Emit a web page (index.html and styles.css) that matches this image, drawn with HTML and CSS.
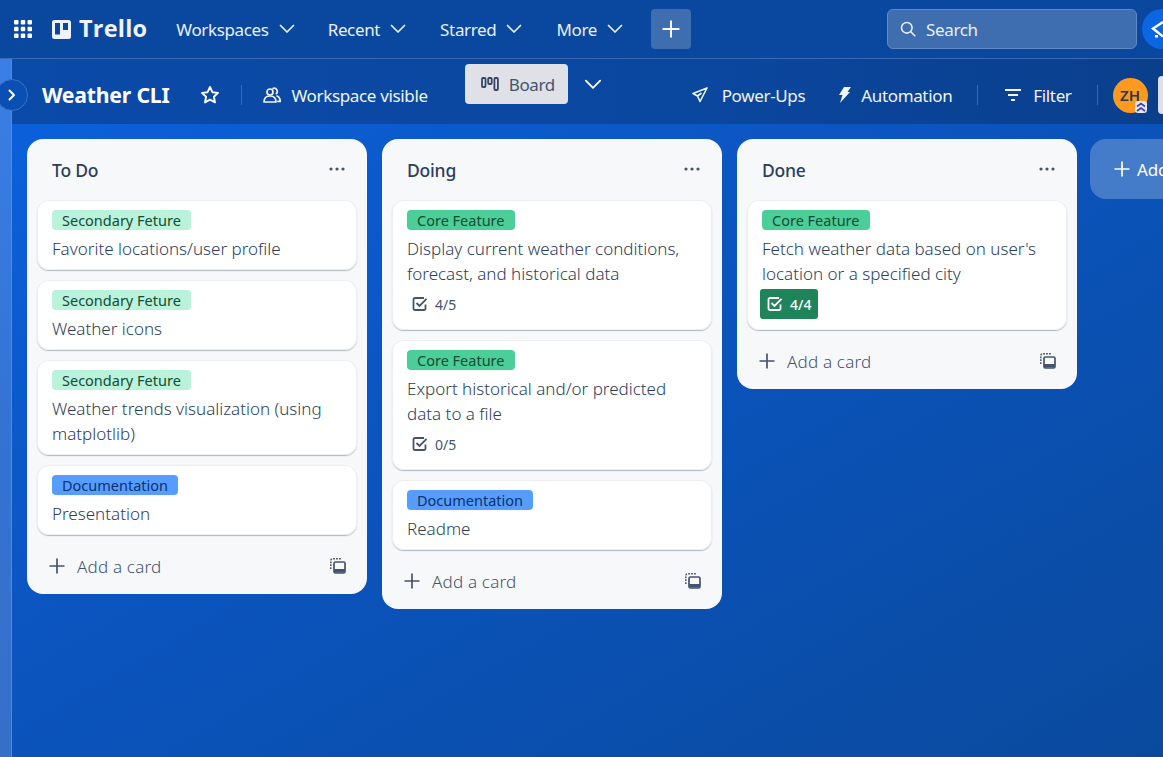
FILE: index.html
```html
<!DOCTYPE html>
<html lang="en">
<head>
<meta charset="utf-8">
<title>Weather CLI | Trello</title>
<link rel="stylesheet" href="styles.css">
</head>
<body>
<svg class="defs" width="0" height="0" aria-hidden="true">
  <defs>
    <symbol id="chev" viewBox="0 0 16 10"><path d="M1.500 1.500 8 8l6.500-6.500" fill="none" stroke="currentColor" stroke-width="1.700" stroke-linecap="round" stroke-linejoin="round"/></symbol>
    <symbol id="dots" viewBox="0 0 16 4"><circle cx="2" cy="2" r="1.600" fill="currentColor"/><circle cx="8" cy="2" r="1.600" fill="currentColor"/><circle cx="14" cy="2" r="1.600" fill="currentColor"/></symbol>
    <symbol id="plus" viewBox="0 0 16 16"><path d="M8 .5v15M.5 8h15" fill="none" stroke="currentColor" stroke-width="1.700"/></symbol>
    <symbol id="tpl" viewBox="0 0 16 16"><path d="M.8 11V2.500A1.700 1.700 0 0 1 2.500.8H11" fill="none" stroke="currentColor" stroke-width="1.500" stroke-dasharray="1.800 1.100"/><rect x="4" y="4" width="11" height="11" rx="1.500" fill="none" stroke="currentColor" stroke-width="1.700"/><path d="M4 11h11v3.500H4Z" fill="currentColor"/></symbol>
    <symbol id="check" viewBox="0 0 16 16"><path d="M13.500 8.500v4A1.500 1.500 0 0 1 12 14H3a1.500 1.500 0 0 1-1.500-1.500v-9A1.500 1.500 0 0 1 3 2h9" fill="none" stroke="currentColor" stroke-width="1.800"/><path d="m4.500 7 3 3L14.500 2.800" fill="none" stroke="currentColor" stroke-width="1.800"/></symbol>
  </defs>
</svg>

<header class="topnav">
  <svg class="apps" viewBox="0 0 18 18" width="18" height="18"><g fill="currentColor"><rect x="0" y="0" width="4.500" height="4.500" rx="1"/><rect x="6.750" y="0" width="4.500" height="4.500" rx="1"/><rect x="13.500" y="0" width="4.500" height="4.500" rx="1"/><rect x="0" y="6.750" width="4.500" height="4.500" rx="1"/><rect x="6.750" y="6.750" width="4.500" height="4.500" rx="1"/><rect x="13.500" y="6.750" width="4.500" height="4.500" rx="1"/><rect x="0" y="13.500" width="4.500" height="4.500" rx="1"/><rect x="6.750" y="13.500" width="4.500" height="4.500" rx="1"/><rect x="13.500" y="13.500" width="4.500" height="4.500" rx="1"/></g></svg>
  <div class="logo">
    <svg viewBox="0 0 19 19" width="19" height="19"><path fill-rule="evenodd" d="M2.500 0h14A2.500 2.500 0 0 1 19 2.500v14a2.500 2.500 0 0 1-2.500 2.500h-14A2.500 2.500 0 0 1 0 16.500v-14A2.500 2.500 0 0 1 2.500 0ZM3 3v11.500h5V3Zm8 0v7h5V3Z" fill="currentColor"/></svg>
    <span>Trello</span>
  </div>
  <nav class="menu">
    <a class="menu-item">Workspaces<svg class="chev"><use href="#chev"/></svg></a>
    <a class="menu-item">Recent<svg class="chev"><use href="#chev"/></svg></a>
    <a class="menu-item">Starred<svg class="chev"><use href="#chev"/></svg></a>
    <a class="menu-item">More<svg class="chev"><use href="#chev"/></svg></a>
  </nav>
  <button class="create"><svg width="18" height="18"><use href="#plus"/></svg></button>
  <div class="search">
    <svg viewBox="0 0 16 16" width="16" height="16"><circle cx="6.800" cy="6.800" r="5.300" fill="none" stroke="currentColor" stroke-width="1.600"/><path d="m10.800 10.800 4 4" stroke="currentColor" stroke-width="1.600" stroke-linecap="round"/></svg>
    <span>Search</span>
  </div>
  <div class="notice"><svg viewBox="0 0 40 40" width="40" height="40"><path d="M21 13 11 19.500l10 8" fill="none" stroke="#fff" stroke-width="2.400"/><path d="M13 26h3v2.500h-3Z" fill="#fff"/></svg></div>
</header>

<div class="page">
  <div class="sidebar-strip"></div>
  <button class="side-toggle"><svg viewBox="0 0 8 12" width="8" height="12"><path d="m1.500 1.500 4.500 4.500-4.500 4.500" fill="none" stroke="currentColor" stroke-width="2" stroke-linecap="round" stroke-linejoin="round"/></svg></button>

  <div class="boardbar">
    <h1 class="title">Weather CLI</h1>
    <svg class="star" viewBox="0 0 20 20" width="20" height="20"><path d="m10 2 2.400 5.200 5.600.7-4.100 3.900 1.100 5.600-5-2.800-5 2.800 1.100-5.600L2 7.900l5.600-.7Z" fill="none" stroke="currentColor" stroke-width="1.900" stroke-linejoin="round"/></svg>
    <span class="divider d1"></span>
    <div class="bar-item visible">
      <svg viewBox="0 0 18 16" width="18" height="16"><g fill="none" stroke="currentColor" stroke-width="1.700"><circle cx="7" cy="5" r="3"/><path d="M1 15c0-3.800 2.400-6 6-6s6 2.200 6 6Z" stroke-linejoin="round"/><path d="M9.500 1.700a3 3 0 0 1 3.200 5.300M13.500 8.700c2.200.8 3.700 3 3.700 5.600h-3"/></g></svg>
      <span>Workspace visible</span>
    </div>
    <div class="board-tab">
      <svg viewBox="0 0 18 14" width="18" height="14"><g fill="none" stroke="currentColor" stroke-width="1.800"><rect x="1" y="1" width="3.500" height="9" rx="1"/><rect x="7.200" y="1" width="3.500" height="6" rx="1"/><rect x="13.400" y="1" width="3.500" height="12" rx="1"/></g></svg>
      <span>Board</span>
    </div>
    <svg class="chev-big"><use href="#chev"/></svg>
    <div class="bar-item power">
      <svg viewBox="0 0 16 16" width="16" height="16"><path d="M15 1 1 6.500 5.500 9l2.500 5.500Z M5.500 9 9.500 6" fill="none" stroke="currentColor" stroke-width="1.600" stroke-linejoin="round"/></svg>
      <span>Power-Ups</span>
    </div>
    <div class="bar-item auto">
      <svg viewBox="0 0 13 16" width="13" height="16"><path d="M6 0h7L9.500 5H12L2 16l2.500-8H1Z" fill="currentColor"/></svg>
      <span>Automation</span>
    </div>
    <span class="divider d3"></span>
    <div class="bar-item filter">
      <svg viewBox="0 0 16 12" width="16" height="12"><path d="M0 1h16M3 6h10M6 11h4" stroke="currentColor" stroke-width="1.800"/></svg>
      <span>Filter</span>
    </div>
    <span class="divider d4"></span>
    <div class="avatar">ZH
      <span class="admin"><svg viewBox="0 0 12 12" width="12" height="12"><path d="m2 5.500 4-3 4 3M2 10l4-3 4 3" fill="none" stroke="#3f3fb5" stroke-width="1.600"/></svg></span>
    </div>
    <div class="share"></div>
  </div>

  <main class="board">
    <section class="list">
      <header class="list-head"><h2>To Do</h2><svg class="dots"><use href="#dots"/></svg></header>
      <div class="cards">
        <article class="card"><span class="label sec">Secondary Feture</span><p>Favorite locations/user profile</p></article>
        <article class="card"><span class="label sec">Secondary Feture</span><p>Weather icons</p></article>
        <article class="card"><span class="label sec">Secondary Feture</span><p>Weather trends visualization (using matplotlib)</p></article>
        <article class="card"><span class="label doc">Documentation</span><p>Presentation</p></article>
      </div>
      <footer class="list-foot"><svg class="plus"><use href="#plus"/></svg><span>Add a card</span><svg class="tpl"><use href="#tpl"/></svg></footer>
    </section>

    <section class="list">
      <header class="list-head"><h2>Doing</h2><svg class="dots"><use href="#dots"/></svg></header>
      <div class="cards">
        <article class="card"><span class="label core">Core Feature</span><p>Display current weather conditions, forecast, and historical data</p><div class="badges"><span class="badge"><svg><use href="#check"/></svg>4/5</span></div></article>
        <article class="card"><span class="label core">Core Feature</span><p>Export historical and/or predicted data to a file</p><div class="badges"><span class="badge"><svg><use href="#check"/></svg>0/5</span></div></article>
        <article class="card"><span class="label doc">Documentation</span><p>Readme</p></article>
      </div>
      <footer class="list-foot"><svg class="plus"><use href="#plus"/></svg><span>Add a card</span><svg class="tpl"><use href="#tpl"/></svg></footer>
    </section>

    <section class="list">
      <header class="list-head"><h2>Done</h2><svg class="dots"><use href="#dots"/></svg></header>
      <div class="cards">
        <article class="card"><span class="label core">Core Feature</span><p>Fetch weather data based on user's location or a specified city</p><div class="badges"><span class="badge done"><svg><use href="#check"/></svg>4/4</span></div></article>
      </div>
      <footer class="list-foot"><svg class="plus"><use href="#plus"/></svg><span>Add a card</span><svg class="tpl"><use href="#tpl"/></svg></footer>
    </section>

    <div class="add-list"><svg width="16" height="16"><use href="#plus"/></svg><span>Add another list</span></div>
  </main>
</div>
</body>
</html>
```
FILE: styles.css
```css
* { box-sizing: border-box; }
html, body { margin: 0; height: 100%; }
body {
  width: 1163px;
  height: 757px;
  overflow: hidden;
  font-family: "Noto Sans", "Open Sans", sans-serif;
  color: #172b4d;
  background: linear-gradient(150deg, #0b63e0 0%, #0b55c0 45%, #0a4a9e 100%);
  display: flex;
  flex-direction: column;
}
.defs { position: absolute; }
svg { display: block; flex: none; }
button { border: 0; padding: 0; font: inherit; color: inherit; }

/* top nav */
.topnav {
  height: 59px;
  flex: none;
  display: flex;
  align-items: center;
  color: #e9f0fb;
  background: #0a479f;
  border-bottom: 1px solid #3c6ab0;
  overflow: hidden;
}
.topnav > * { flex: none; }
.apps { margin-left: 14px; color: #fff; }
.logo { display: flex; align-items: center; gap: 8px; margin-left: 20px; color: #eef3fb; }
.logo span { font: 700 23.500px/1 "Open Sans", sans-serif; letter-spacing: .2px; }
.menu { display: flex; margin-left: 29px; gap: 34px; }
.menu-item { display: flex; align-items: center; gap: 10px; font-size: 17px; letter-spacing: -.35px; }
.menu-item:nth-child(2) { margin-left: -1px; }
.chev { width: 16px; height: 10px; }
.create {
  width: 40px; height: 40px; margin-left: 28px;
  display: flex; align-items: center; justify-content: center;
  background: #3e6db0; color: #fff; border-radius: 4px;
}
.search {
  width: 250px; height: 40px; margin-left: 196px;
  display: flex; align-items: center; gap: 10px; padding-left: 12px;
  background: #3e6db0; border: 1px solid #6189c2; border-radius: 6px;
  font-size: 17px; letter-spacing: -.35px;
}
.notice {
  width: 40px; height: 40px; margin-left: 5px;
  border-radius: 50%; background: #0c66e4;
}

/* page */
.page { position: relative; flex: 1; min-height: 0; padding-left: 12px; display: flex; flex-direction: column; }
.sidebar-strip {
  position: absolute; left: 0; top: 0; bottom: 0; width: 12px;
  background: linear-gradient(180deg, #3a7fe6 0%, #3473d4 50%, #366fc8 100%);
  border-right: 1px solid #5089e0;
}
.side-toggle {
  position: absolute; left: -4px; top: 20px; width: 32px; height: 32px; z-index: 2;
  border-radius: 50%; background: #0a4fb4; border: 1px solid #3c72c4; color: #fff;
  display: flex; align-items: center; justify-content: center;
}

/* board bar */
.boardbar {
  height: 65px; flex: none;
  display: flex; align-items: center;
  padding-top: 7px;
  color: #f0f4fb;
  background: linear-gradient(90deg, #0a4aa8 0%, #0a479f 60%, #0a3f8c 100%);
  font-size: 17px; letter-spacing: -.35px;
  white-space: nowrap;
}
.boardbar > * { flex: none; }
.title { margin: 0 0 0 30px; font-size: 21.200px; line-height: 1; font-weight: 700; color: #fff; letter-spacing: -.2px; }
.star { margin-left: 30px; color: #fff; }
.divider { width: 1px; height: 20px; background: #3c6ab0; }
.d1 { margin-left: 21px; }
.bar-item { display: flex; align-items: center; gap: 11px; }
.visible { margin-left: 21px; }
.board-tab {
  width: 103px; height: 40px; margin: -22px 0 0 37px;
  display: flex; align-items: center; gap: 10px; padding-left: 16px;
  background: #dfe1e6; color: #44546f; border-radius: 4px;
}
.board-tab svg { color: #344563; }
.chev-big { width: 18px; height: 11px; margin: -21px 0 0 16px; color: #fff; }
.power { margin-left: 90px; gap: 14px; }
.auto { margin-left: 33px; gap: 10px; }
.d3 { margin-left: 25px; }
.filter { margin-left: 27px; gap: 12px; }
.d4 { margin-left: 25px; }
.avatar {
  position: relative; width: 35px; height: 35px; margin-left: 15px;
  border-radius: 50%; background: #ff991f; color: #253858;
  display: flex; align-items: center; justify-content: center;
  font-size: 15px; font-weight: 600; letter-spacing: 0;
}
.admin {
  position: absolute; right: 1px; bottom: 0; width: 12px; height: 12px;
  background: #e4e6f0; border-radius: 3px;
}
.share { width: 20px; height: 38px; margin-left: 10px; background: #dfe1e6; border-radius: 4px; }

/* board */
.board { flex: 1; min-height: 0; display: flex; align-items: flex-start; gap: 15px; padding: 15px 0 0 15px; }
.list {
  width: 340px; flex: none;
  background: #f7f8f9; border-radius: 16px;
}
.list-head {
  height: 61px; display: flex; align-items: center; justify-content: space-between;
  padding: 0 22px 0 25px;
}
.list-head h2 { margin: 0; font-size: 17.500px; font-weight: 500; color: #2c3e5d; letter-spacing: -.2px; }
.dots { width: 16px; height: 4px; color: #44546f; margin-top: -2px; }
.cards { display: flex; flex-direction: column; gap: 10px; padding: 0 10px; }
.card {
  background: #fff; border-radius: 12px; padding: 10px 15px 9px;
  box-shadow: 0 1px 1px #b3bac5, inset 0 0 0 1px #eceef1;
}
.label {
  display: block; width: fit-content; height: 20px; padding: 0 10px;
  border-radius: 4px; font-size: 14.500px; line-height: 20px; letter-spacing: 0; color: #216e4e;
}
.sec { background: #baf3db; color: #164b35; }
.core { background: #4bce97; color: #164b35; }
.doc { background: #579dff; color: #09326c; }
.card p { margin: 6px 0 0; font-size: 17px; font-weight: 300; line-height: 25px; color: #2c3e5d; letter-spacing: 0; }
.badges { margin-top: 3px; height: 30px; display: flex; margin-bottom: 2px; }
.badge {
  display: inline-flex; align-items: center; gap: 7px; height: 30px; padding: 0 7px 0 5px;
  font-size: 14px; color: #44546f; border-radius: 3px;
}
.badge svg { width: 16px; height: 16px; }
.badge.done { margin-left: -2px; padding: 0 7px; background: #1f845a; color: #fff; font-weight: 500; }
.list-foot {
  height: 59px; display: flex; align-items: center; padding: 3px 21px 0 22px;
  color: #44546f; font-size: 17px; font-weight: 300; letter-spacing: .2px;
}
.plus { width: 16px; height: 16px; margin-right: 12px; }
.tpl { width: 16px; height: 16px; margin-left: auto; color: #44546f; }

.add-list {
  width: 340px; height: 60px; flex: none; margin-left: -2px;
  display: flex; align-items: center; gap: 7px; padding-left: 24px;
  background: rgba(255,255,255,.24); border-radius: 16px; color: #fff;
  font-size: 17px; letter-spacing: -.2px;
}
```
